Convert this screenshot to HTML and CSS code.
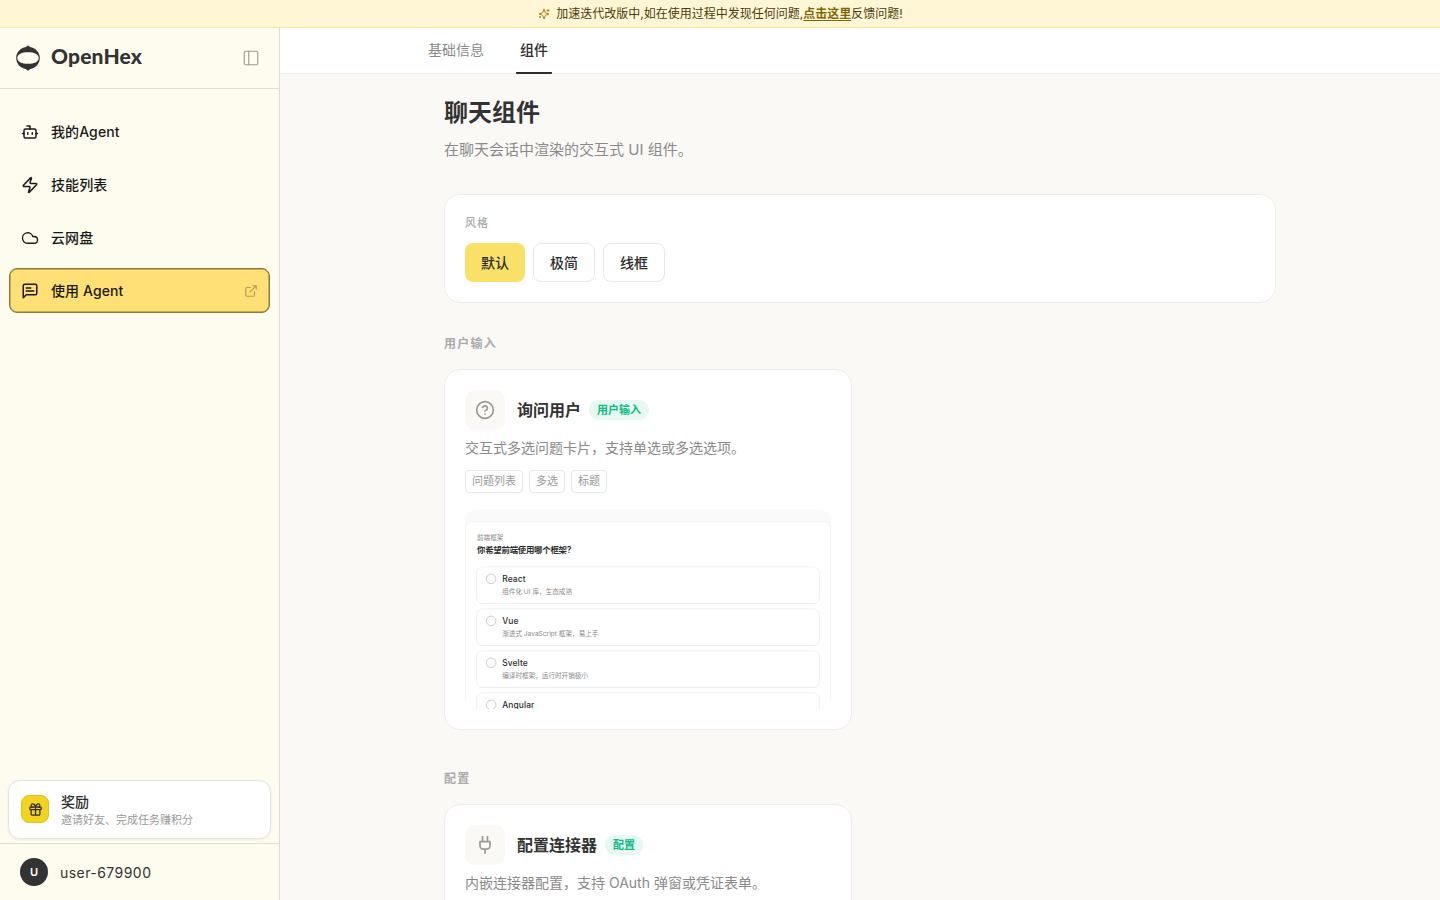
FILE: index.html
```html
<!DOCTYPE html>
<html lang="zh-CN">
<head>
<meta charset="utf-8">
<title>OpenHex</title>
<link rel="stylesheet" href="styles.css">
</head>
<body>
<div class="banner">
  <svg class="ic banner-icon" viewBox="0 0 24 24"><path d="M9.937 15.5A2 2 0 0 0 8.5 14.063l-6.135-1.582a.5.5 0 0 1 0-.962L8.5 9.936A2 2 0 0 0 9.937 8.5l1.582-6.135a.5.5 0 0 1 .963 0L14.063 8.5A2 2 0 0 0 15.5 9.937l6.135 1.581a.5.5 0 0 1 0 .964L15.5 14.063a2 2 0 0 0-1.437 1.437l-1.582 6.135a.5.5 0 0 1-.963 0z"/><path d="M20 3v4M22 5h-4M4 17v2M5 18H3"/></svg>
  <span>加速迭代改版中,如在使用过程中发现任何问题,<a class="banner-link">点击这里</a>反馈问题!</span>
</div>
<div class="shell">
  <aside class="sidebar">
    <div class="brand">
      <svg class="logo" viewBox="0 0 24 26"><path fill="#333" fill-rule="evenodd" d="M12 .3 14 2C19.500 3 23.800 7 23.800 13S19.500 23 14 24.200L12 25.800 10 24.200C4.500 23 .2 19 .2 13S4.500 3 10 2ZM1.300 13C1.300 17 6 18.800 12 18.800S22.700 17 22.700 13 18 7.200 12 7.200 1.300 9 1.300 13Z"/></svg>
      <span class="brand-name">OpenHex</span>
      <svg class="ic panel" viewBox="0 0 24 24"><rect x="3" y="3" width="18" height="18" rx="2"/><path d="M9 3v18"/></svg>
    </div>
    <nav class="nav">
      <a class="item"><svg class="ic" viewBox="0 0 24 24"><path d="M12 8V4H8"/><rect width="16" height="12" x="4" y="8" rx="2"/><path d="M2 14h2M20 14h2M15 13v2M9 13v2"/></svg><span>我的Agent</span></a>
      <a class="item"><svg class="ic" viewBox="0 0 24 24"><path d="M4 14a1 1 0 0 1-.78-1.630l9.900-10.200a.5.5 0 0 1 .86.460l-1.920 6.020A1 1 0 0 0 13 10h7a1 1 0 0 1 .78 1.630l-9.900 10.200a.5.5 0 0 1-.86-.460l1.920-6.020A1 1 0 0 0 11 14z"/></svg><span>技能列表</span></a>
      <a class="item"><svg class="ic thin" viewBox="0 0 24 24"><path d="M17.500 19H9a7 7 0 1 1 6.710-9h1.790a4.500 4.500 0 1 1 0 9Z"/></svg><span>云网盘</span></a>
      <a class="item active"><svg class="ic" viewBox="0 0 24 24"><path d="M21 15a2 2 0 0 1-2 2H7l-4 4V5a2 2 0 0 1 2-2h14a2 2 0 0 1 2 2zM13 8H7M17 12H7"/></svg><span>使用 Agent</span><svg class="ic ext" viewBox="0 0 24 24"><path d="M15 3h6v6M10 14 21 3M18 13v6a2 2 0 0 1-2 2H5a2 2 0 0 1-2-2V8a2 2 0 0 1 2-2h6"/></svg></a>
    </nav>
    <div class="reward">
      <div class="gift"><svg class="ic" viewBox="0 0 24 24"><rect x="3" y="8" width="18" height="4" rx="1"/><path d="M12 8v13M19 12v7a2 2 0 0 1-2 2H7a2 2 0 0 1-2-2v-7M7.500 8a2.500 2.500 0 0 1 0-5A4.800 8 0 0 1 12 8a4.800 8 0 0 1 4.500-5 2.500 2.500 0 0 1 0 5"/></svg></div>
      <div class="reward-text"><div class="reward-title">奖励</div><div class="reward-sub">邀请好友、完成任务赚积分</div></div>
    </div>
    <div class="user"><div class="avatar">U</div><span>user-679900</span></div>
  </aside>
  <main class="main">
    <div class="tabs"><a class="tab">基础信息</a><a class="tab current">组件</a></div>
    <div class="content">
      <h1>聊天组件</h1>
      <p class="lead">在聊天会话中渲染的交互式 UI 组件。</p>
      <section class="card style-card">
        <div class="style-label">风格</div>
        <div class="styles"><button class="btn chosen">默认</button><button class="btn">极简</button><button class="btn">线框</button></div>
      </section>
      <h2>用户输入</h2>
      <section class="card comp">
        <div class="head">
          <div class="box"><svg class="ic" viewBox="0 0 24 24"><circle cx="12" cy="12" r="10"/><path d="M9.090 9a3 3 0 0 1 5.830 1c0 2-3 3-3 3M12 17h.01"/></svg></div>
          <h3>询问用户</h3><span class="pill">用户输入</span>
        </div>
        <p class="desc">交互式多选问题卡片，支持单选或多选选项。</p>
        <div class="tags"><span>问题列表</span><span>多选</span><span>标题</span></div>
        <div class="preview">
          <div class="ask">
            <div class="ask-head">前端框架</div>
            <div class="ask-q">你希望前端使用哪个框架?</div>
            <div class="opts">
              <div class="opt"><i></i><div><b>React</b><small>组件化 UI 库，生态成熟</small></div></div>
              <div class="opt"><i></i><div><b>Vue</b><small>渐进式 JavaScript 框架，易上手</small></div></div>
              <div class="opt"><i></i><div><b>Svelte</b><small>编译时框架，运行时开销极小</small></div></div>
              <div class="opt"><i></i><div><b>Angular</b></div></div>
            </div>
          </div>
        </div>
      </section>
      <h2>配置</h2>
      <section class="card comp">
        <div class="head">
          <div class="box"><svg class="ic" viewBox="0 0 24 24"><path d="M12 22v-5M9 8V2M15 8V2M18 8v5a4 4 0 0 1-4 4h-4a4 4 0 0 1-4-4V8Z"/></svg></div>
          <h3>配置连接器</h3><span class="pill">配置</span>
        </div>
        <p class="desc">内嵌连接器配置，支持 OAuth 弹窗或凭证表单。</p>
      </section>
    </div>
  </main>
</div>
</body>
</html>
```
FILE: styles.css
```css
* { box-sizing: border-box; }
body {
  margin: 0;
  height: 900px;
  overflow: hidden;
  display: flex;
  flex-direction: column;
  font-family: Inter, "Noto Sans CJK SC", sans-serif;
  font-size: 14px;
  color: #2d2d2d;
  background: #faf9f6;
}
h1, h2, h3, p { margin: 0; }
.ic { fill: none; stroke: currentColor; stroke-width: 2; stroke-linecap: round; stroke-linejoin: round; flex: none; }

.banner {
  flex: none;
  height: 28px;
  display: flex;
  align-items: center;
  justify-content: center;
  gap: 6px;
  padding-left: 1px;
  font-size: 12px;
  color: #4a3d0a;
  background: #fff6d6;
  border-bottom: 1px solid #f5e8a0;
}
.banner span { padding-bottom: 2px; }
.banner-icon { width: 12px; height: 12px; color: #a8841a; }
.banner-link { font-weight: 600; color: #806600; text-decoration: underline; text-underline-offset: 2px; }

.shell { flex: 1; min-height: 0; display: flex; }
.sidebar {
  flex: none;
  width: 280px;
  display: flex;
  flex-direction: column;
  background: #fefcef;
  border-right: 1px solid #deddd2;
}
.brand { height: 61px; display: flex; align-items: center; padding: 0 19px 0 16px; border-bottom: 1px solid #deddd2; }
.logo { width: 24px; height: 26px; }
.brand-name { margin-left: 11px; padding-bottom: 5px; font-family: Lato, sans-serif; font-size: 21px; font-weight: 900; line-height: 24px; letter-spacing: .15px; color: #333; }
.panel { width: 18px; height: 18px; margin-left: auto; color: #9b9a92; stroke-width: 1.5; }

.nav { flex: 1; display: flex; flex-direction: column; gap: 8px; padding: 20px 9px; }
.item {
  height: 45px;
  display: flex;
  align-items: center;
  gap: 12px;
  padding: 0 11px 0 10px;
  border: 2px solid transparent;
  border-radius: 8px;
  font-weight: 500;
  letter-spacing: .1px;
  color: #1a1a1a;
}
.item span { padding-bottom: 2px; }
.item .ic { width: 18px; height: 18px; }
.item .thin { stroke-width: 1.8; }
.item.active { background: #ffe076; border: 1px solid #8c7a3a; box-shadow: inset 0 0 0 .5px #8c7a3a; padding-left: 11px; }
.item .ext { width: 14px; height: 14px; margin-left: auto; color: #b39c52; }

.reward {
  height: 59px;
  margin: 0 8px 4px;
  padding: 0 12px 1px;
  display: flex;
  align-items: center;
  gap: 12px;
  background: #fff;
  border: 1px solid #e4e4e7;
  border-radius: 12px;
  box-shadow: 0 1px 3px rgba(0, 0, 0, .08);
}
.gift { width: 28px; height: 28px; display: grid; place-items: center; background: #f2d420; border: 1px solid #dfc31c; border-radius: 8px; }
.gift .ic { width: 15px; height: 15px; }
.reward-text { padding-top: 2px; }
.reward-title { font-weight: 500; line-height: 20px; }
.reward-sub { font-size: 11px; line-height: 16px; color: #999; }
.user { height: 57px; display: flex; align-items: center; gap: 12px; padding-left: 20px; border-top: 1px solid #deddd2; font-size: 14px; color: #333; letter-spacing: .45px; }
.avatar { width: 28px; height: 28px; border-radius: 50%; display: grid; place-items: center; background: #333; color: #fff; font-size: 11px; font-weight: 600; letter-spacing: 0; }

.main { flex: 1; min-width: 0; display: flex; flex-direction: column; }
.tabs { flex: none; height: 46px; display: flex; gap: 28px; padding-left: 144px; background: #fff; border-bottom: 1px solid #ececec; }
.tab { height: 46px; padding: 0 4px; line-height: 44px; color: #8a8a8a; }
.tab.current { color: #2d2d2d; font-weight: 500; border-bottom: 2px solid #2d2d2d; border-radius: 1px; }

.content { width: 832px; height: 826px; overflow: hidden; margin: 0 auto; padding-top: 20px; }
h1 { padding-top: 1px; font-size: 24px; line-height: 36px; font-weight: 700; color: #333; }
.lead { margin-top: 8px; font-size: 15px; line-height: 22px; color: #8a8a8a; }
.card { background: #fff; border: 1px solid #ededed; border-radius: 16px; padding: 20px; }
.style-card { margin-top: 33px; height: 109px; }
.style-label { font-size: 11px; line-height: 16px; font-weight: 500; letter-spacing: .9px; color: #aaa; }
.styles { display: flex; gap: 8px; margin-top: 12px; }
.btn { height: 39px; padding: 0 16px; font: 500 14px/21px Inter, "Noto Sans CJK SC", sans-serif; color: #2d2d2d; background: #fff; border: 1px solid #e8e8e8; border-radius: 8px; }
.btn.chosen { background: #f9e168; border: 0; }

h2 { margin: 31px 0 15px; font-size: 12px; line-height: 20px; font-weight: 600; letter-spacing: 1.25px; color: #aaa; }
.comp { width: 408px; height: 361px; }
.comp + h2 { margin-top: 39px; }
.head { display: flex; align-items: center; }
.box { width: 40px; height: 40px; margin-right: 12px; display: grid; place-items: center; background: #faf9f6; border-radius: 10px; color: #999; }
.box .ic { width: 20px; height: 20px; }
h3 { font-size: 16px; line-height: 24px; font-weight: 600; color: #333; }
.pill { margin-left: 8px; height: 20px; padding: 0 8px; border-radius: 10px; font-size: 11px; line-height: 20px; font-weight: 600; color: #10b981; background: #e5f8f1; }
.desc { margin-top: 7px; line-height: 21px; color: #8a8a8a; }
.tags { display: flex; gap: 6px; margin-top: 12px; }
.tags span { height: 23px; padding: 0 6px; border: 1px solid #e8e8e8; border-radius: 4px; font-size: 11px; line-height: 21px; color: #999; }

.preview { height: 200px; margin-top: 16px; padding-top: 12px; overflow: hidden; border-radius: 12px; background: #fafafa; }
.ask { width: 610px; height: 420px; padding: 18px; transform: scale(.6); transform-origin: 0 0; background: #fff; border: 1px solid #ebebeb; border-radius: 12px; }
.ask-head { padding-left: 1px; font-size: 11px; line-height: 16px; color: #8a8a8a; }
.ask-q { margin-top: 2px; padding-left: 1px; font-size: 14px; line-height: 21px; font-weight: 600; letter-spacing: -.4px; }
.opts { display: grid; gap: 8px; margin-top: 18px; }
.opt { height: 62px; display: flex; gap: 10px; padding: 10px 15px; border: 1px solid #e2e2e2; border-radius: 10px; }
.opt i { width: 17px; height: 17px; margin-top: 1px; border: 1.5px solid #aaa; border-radius: 50%; }
.opt b { display: block; font-size: 14px; line-height: 20px; font-weight: 500; letter-spacing: .2px; }
.opt small { display: block; margin-top: 2px; font-size: 11px; line-height: 18px; color: #8a8a8a; }
```
